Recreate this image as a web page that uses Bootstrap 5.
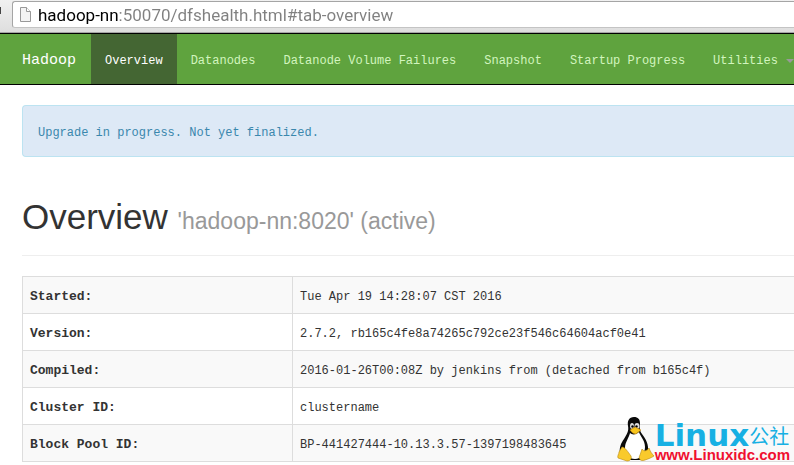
<!DOCTYPE html>
<html lang="en">
<head>
<meta charset="utf-8">
<meta name="viewport" content="width=device-width, initial-scale=1">
<title>Namenode information</title>
<link href="https://cdn.jsdelivr.net/npm/bootstrap@5.3.0/dist/css/bootstrap.min.css" rel="stylesheet">
<style>
body{font:12px/20px "Liberation Mono",monospace;color:#333;background:#fff;overflow-x:hidden}
.browser-bar{height:33px;padding:1px 0 4px 12px;background:linear-gradient(#f1f1f1,#dedede);border-bottom:1px solid #a5a5a5;position:relative}
.browser-bar::before{content:"";position:absolute;left:0;top:7px;width:1px;height:7px;background:#444}
.address{height:27px;background:#fff;border:1px solid #a5a5a5;border-right:0;border-bottom-color:#c4c4c4;border-radius:3px 0 0 3px;padding-left:6px}
.address input{border:0;outline:0;padding:0;margin-left:6px;font:17px/24px Roboto,sans-serif;color:transparent;background:linear-gradient(90deg,#000 81px,#808080 81px);-webkit-background-clip:text;background-clip:text}
.dfs-nav{background:#5fa33e;border:solid #000;border-width:1px 0;padding:0 0 0 22px;min-height:52px}
.dfs-nav .navbar-brand{font-size:15px;line-height:20px;color:#fff;padding:17px 0 13px;margin:0 15px 0 0}
.dfs-nav .navbar-nav .nav-link{font-size:12px;line-height:20px;padding:17px 14px 13px;color:#d2f5be;white-space:nowrap}
.dfs-nav .navbar-nav .nav-link.active{background:#446633;color:#fff}
.dfs-nav .dropdown-toggle::after{margin-left:8px;border-width:4px 4px 0;border-top-color:#999;vertical-align:1px}
.page-body{padding-left:22px}
.upgrade-note{margin:20px 0 0;padding:17px 15px 13px;background:#dde9f6;border:1px solid #bce3f1;border-right:0;border-radius:4px 0 0 4px;color:#3a87ad}
.page-title{margin:40px 0 20px;padding-bottom:14px;border-bottom:1px solid #eee;font:35px/40px "Liberation Sans",sans-serif}
.page-title small{font-size:23px;color:#999}
.summary{--bs-table-striped-bg:#f9f9f9;--bs-table-striped-color:#333;--bs-table-color:#333;border-color:#ddd;margin:0;table-layout:fixed}
.summary th{width:35%;font-size:13px}
.summary th,.summary td{padding:10px 8px 6px 7px;line-height:20px}
.summary>tbody>tr>:last-child{border-right:0}
.site-stamp{position:absolute;right:4px;top:416px;color:#17b0e3}
.stamp-name{font:bold 31px/38px "DejaVu Sans",sans-serif}
.stamp-cjk{font:20px/40px "Noto Sans CJK SC",sans-serif}
.stamp-url{font:bold 15px/16px "Liberation Sans",sans-serif;color:#f01030;margin-top:-9px}
</style>
</head>
<body>
<header class="browser-bar">
  <div class="address d-flex align-items-center">
    <svg width="13" height="17" viewBox="0 0 13 17" class="flex-shrink-0" aria-hidden="true"><path d="M1.500 1.500h6l4 4v10h-10z" fill="#f4f4f4" stroke="#999"/><path d="M7.500 1.500v4h4" fill="#fff" stroke="#999"/></svg>
    <input type="text" class="flex-grow-1" aria-label="Address" value="hadoop-nn:50070/dfshealth.html#tab-overview">
  </div>
</header>
<nav class="navbar navbar-expand dfs-nav">
  <a class="navbar-brand" href="#">Hadoop</a>
  <ul class="navbar-nav">
    <li class="nav-item"><a class="nav-link active" aria-current="page" href="#tab-overview">Overview</a></li>
    <li class="nav-item"><a class="nav-link" href="#tab-datanode">Datanodes</a></li>
    <li class="nav-item"><a class="nav-link" href="#tab-volume">Datanode Volume Failures</a></li>
    <li class="nav-item"><a class="nav-link" href="#tab-snapshot">Snapshot</a></li>
    <li class="nav-item"><a class="nav-link" href="#tab-startup">Startup Progress</a></li>
    <li class="nav-item dropdown"><a class="nav-link dropdown-toggle" href="#" role="button" data-bs-toggle="dropdown">Utilities</a></li>
  </ul>
</nav>
<main class="page-body">
  <div class="alert upgrade-note" role="alert">Upgrade in progress. Not yet finalized.</div>
  <h1 class="page-title">Overview <small>'hadoop-nn:8020' (active)</small></h1>
  <table class="table table-bordered table-striped summary">
    <tbody>
      <tr><th scope="row">Started:</th><td>Tue Apr 19 14:28:07 CST 2016</td></tr>
      <tr><th scope="row">Version:</th><td>2.7.2, rb165c4fe8a74265c792ce23f546c64604acf0e41</td></tr>
      <tr><th scope="row">Compiled:</th><td>2016-01-26T00:08Z by jenkins from (detached from b165c4f)</td></tr>
      <tr><th scope="row">Cluster ID:</th><td>clustername</td></tr>
      <tr><th scope="row">Block Pool ID:</th><td>BP-441427444-10.13.3.57-1397198483645</td></tr>
    </tbody>
  </table>
</main>
<aside class="site-stamp d-flex align-items-start">
  <svg width="38" height="46" viewBox="0 0 38 46" aria-hidden="true">
    <path d="M17 1c-5 0-7 4-6 9 1 5-1 8-4 13-3 4-5 9-4 14l8 7h13l7-8c1-7-2-13-6-18-3-4-2-7-2-10 0-5-2-7-6-7z" fill="#0a0a0a"/>
    <path d="M13 17c2 2 6 2 9-1 1 4 6 8 6 15 0 6-4 12-10 12S8 39 8 32c0-6 4-10 5-15z" fill="#fff"/>
    <ellipse cx="15" cy="10" rx="2" ry="3" fill="#ddd"/><ellipse cx="20" cy="10" rx="2.500" ry="3" fill="#ddd"/>
    <circle cx="15.500" cy="10.500" r="1.200"/><circle cx="19.500" cy="10.500" r="1.200"/>
    <path d="M13 14l5-3 6 3-5 4c-2 0-4-1-6-4z" fill="#f8c51c" stroke="#b87a08" stroke-width=".5"/>
    <path d="M5 31c3 0 6 5 9 9 1 3-1 5-4 5L1 42c-1-2 1-4 1-6z" fill="#f9ca2c" stroke="#b98a12" stroke-width=".6"/>
    <path d="M25 33c2 3 5 2 7-1 1 3 3 6 5 8-3 2-6 3-9 4-5 2-7-2-5-5z" fill="#f9ca2c" stroke="#b98a12" stroke-width=".6"/>
  </svg>
  <div class="text-nowrap">
    <div class="d-flex"><span class="stamp-name">Linux</span><span class="stamp-cjk">公社</span></div>
    <div class="stamp-url">www.Linuxidc.com</div>
  </div>
</aside>
<script src="https://cdn.jsdelivr.net/npm/bootstrap@5.3.0/dist/js/bootstrap.bundle.min.js"></script>
</body>
</html>
